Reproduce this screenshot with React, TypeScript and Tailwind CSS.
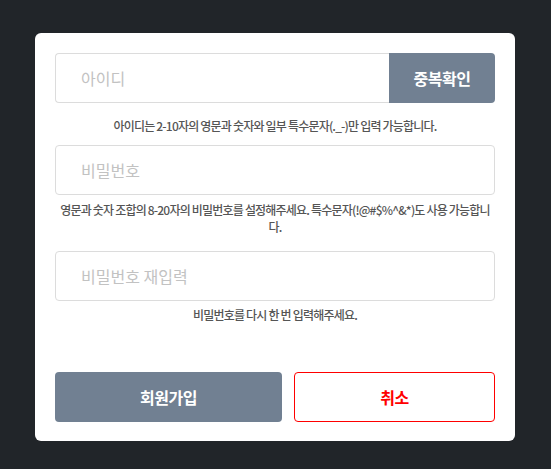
import React from "react";

const font = { fontFamily: '"Noto Sans CJK KR", "Noto Sans", sans-serif' };

export default function App() {
  return (
    <div className="w-[551px] h-[469px] bg-[#212529] pt-[33px] pl-[35px]" style={font}>
      <div className="w-[480px] h-[408px] bg-white rounded-[6px] px-[20px] pt-[20px] flex flex-col">
        <div className="flex h-[50px]">
          <input
            placeholder="아이디"
            className="flex-1 min-w-0 h-full border border-[#dcdcdc] border-r-0 rounded-l-[4px] pl-[25px] text-[16px] placeholder:text-[#c2c2c2] outline-none"
          />
          <button className="w-[106px] h-full bg-[#718092] text-white text-[16px] font-bold rounded-r-[4px] tracking-[-0.5px]">
            중복확인
          </button>
        </div>
        <p className="mt-[13px] h-[20px] text-center text-[12px] font-medium text-[#555] tracking-[-0.8px] leading-[20px]">
          아이디는 2-10자의 영문과 숫자와 일부 특수문자(._-)만 입력 가능합니다.
        </p>
        <input
          placeholder="비밀번호"
          className="mt-[9px] h-[50px] border border-[#dcdcdc] rounded-[4px] pl-[25px] text-[16px] placeholder:text-[#c2c2c2] outline-none"
        />
        <p className="mt-[6px] text-center text-[12px] font-medium text-[#555] tracking-[-0.8px] leading-[17px]">
          영문과 숫자 조합의 8-20자의 비밀번호를 설정해주세요. 특수문자(!@#$%^&*)도 사용 가능합니<br />다.
        </p>
        <input
          placeholder="비밀번호 재입력"
          className="mt-[16px] h-[50px] border border-[#dcdcdc] rounded-[4px] pl-[25px] text-[16px] placeholder:text-[#c2c2c2] outline-none"
        />
        <p className="mt-[4px] h-[20px] text-center text-[12px] font-medium text-[#555] tracking-[-0.8px] leading-[20px]">
          비밀번호를 다시 한 번 입력해주세요.
        </p>
        <div className="mt-[47px] flex gap-[12px] h-[50px]">
          <button className="w-[227px] h-full bg-[#718092] text-white text-[16px] font-bold rounded-[4px] tracking-[-0.5px]">
            회원가입
          </button>
          <button className="flex-1 h-full bg-white border border-[#ff0000] text-[#ff0000] text-[16px] font-bold rounded-[4px] tracking-[-0.5px]">
            취소
          </button>
        </div>
      </div>
    </div>
  );
}
